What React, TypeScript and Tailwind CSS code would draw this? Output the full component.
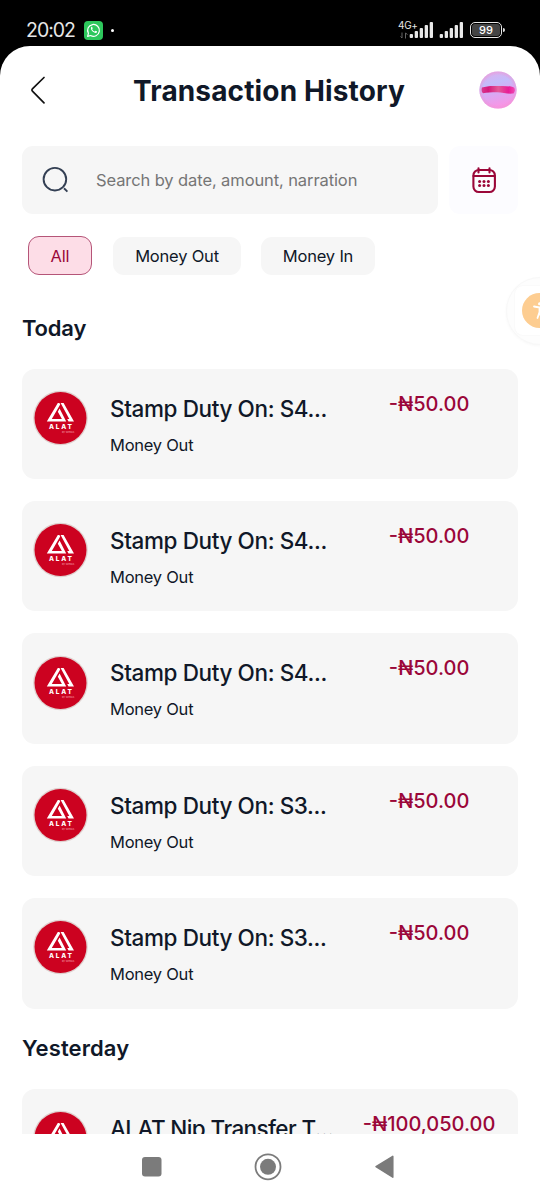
import React from "react";

function StatusBar() {
  const bars = [4, 7, 10, 13, 16];
  return (
    <div className="flex h-[46px] shrink-0 items-start bg-black pl-[26px] pt-[20px] text-[#e6e6e6]">
      <span className="w-[58px] whitespace-nowrap text-[19.5px] font-normal leading-[20px] tracking-[-1px]">20:02</span>
      <svg width="19" height="19" viewBox="0 0 19 19" className="mt-px">
        <rect width="19" height="19" rx="4" fill="#2dc75c" />
        <path d="M3.6 15.4l.8-3.1a5.9 5.9 0 1 1 2.2 2.2z" fill="none" stroke="#fff" strokeWidth="1.2" strokeLinejoin="round" />
        <path d="M7.2 6.1c.5-.5.8-.4 1.1.2l.4 1c.1.4-.5.8-.5 1.1.5 1 1.3 1.7 2.3 2.1.4 0 .7-.9 1.1-.8l1.2.6c.5.3.1 1.2-.3 1.5-1.8 1.2-6.8-2.7-5.3-5.7z" fill="#fff" />
      </svg>
      <span className="ml-[8px] mt-[9px] size-[3px] rounded-full bg-white" />
      <div className="ml-[284px] flex items-start">
        <div className="flex w-[11px] flex-col">
          <span className="whitespace-nowrap text-[10px] leading-[11px] tracking-[-0.3px]">4G+</span>
          <svg width="8" height="7" viewBox="0 0 8 7" className="ml-[2px] mt-px" fill="none" stroke="#666" strokeWidth="1">
            <path d="M2 0.5v5.5M0.5 4.5L2 6M5.5 6.5V1M7.5 2.5L5.5 1" />
          </svg>
        </div>
        <svg width="25" height="18" viewBox="0 0 25 18" fill="#e8e8e8">
          {bars.map((h, i) => (
            <rect key={h} x={i * 5 + 0.7} y={18 - h} width="3.3" height={h} rx="1" />
          ))}
        </svg>
        <svg width="25" height="18" viewBox="0 0 25 18" fill="#e8e8e8" className="ml-[5px]">
          {bars.map((h, i) => (
            <rect key={h} x={i * 5 + 0.7} y={18 - h} width="3.3" height={h} rx="1" />
          ))}
        </svg>
        <div className="ml-[6px] mt-[2px] flex h-[16px] w-[32px] items-center justify-center rounded-[5px] border-[1.5px] border-[#e6e6e6] p-[1px]">
          <span className="flex h-full w-full items-center justify-center rounded-[3px] bg-[#444] text-[11px] font-medium leading-none text-white">99</span>
        </div>
        <span className="ml-px mt-[8px] h-[4px] w-[2px] rounded-r bg-[#ddd]" />
      </div>
    </div>
  );
}

function Orb() {
  return (
    <svg width="38" height="38" viewBox="0 0 38 38">
      <defs>
        <linearGradient id="orb" x1="0.35" y1="0" x2="0.6" y2="1">
          <stop offset="0" stopColor="#dcb0ee" />
          <stop offset="0.3" stopColor="#c3bcfb" />
          <stop offset="0.58" stopColor="#d9a8f3" />
          <stop offset="1" stopColor="#ff90e2" />
        </linearGradient>
        <radialGradient id="rim">
          <stop offset="0.8" stopColor="#f08fd0" stopOpacity="0" />
          <stop offset="1" stopColor="#ec9bd6" stopOpacity="0.6" />
        </radialGradient>
        <linearGradient id="band">
          <stop offset="0" stopColor="#d83a90" />
          <stop offset="0.2" stopColor="#d5187c" />
          <stop offset="0.5" stopColor="#e25a98" />
          <stop offset="0.8" stopColor="#e81c96" />
          <stop offset="1" stopColor="#f04ab4" />
        </linearGradient>
        <filter id="soft" x="-10%" y="-30%" width="120%" height="160%"><feGaussianBlur stdDeviation="0.7" /></filter>
      </defs>
      <circle cx="19" cy="19" r="18.6" fill="url(#orb)" />
      <circle cx="19" cy="19" r="18.6" fill="url(#rim)" />
      <path d="M3 16.6C7 15 12 14.700 19 15S31 14.600 35 16.600C36.300 18.500 36.300 20.500 34.500 22.500C28 23.200 24 21.300 18 21.300S8 21.500 4 22.200C2.500 21 2.300 18.500 3 16.600z" fill="url(#band)" filter="url(#soft)" />
    </svg>
  );
}

function AlatLogo() {
  return (
    <svg width="56" height="56" viewBox="0 0 56 56" className="shrink-0">
      <circle cx="27.5" cy="28" r="27.3" fill="#dfd0ce" />
      <circle cx="27.5" cy="28" r="26" fill="#cc0220" />
      <path d="M24.8 13L13.8 31.500H33.200L26.600 18.600L24.800 21.700L28.900 28.900H18.800L27.200 14.600L26.400 13z" fill="#fff" />
      <path d="M27.6 13H30.600L41 31.500H35.500L34.200 28.900H36.300z" fill="#fff" />
      <text x="28.3" y="38.8" textAnchor="middle" fontFamily="Inter, sans-serif" fontSize="6.5" fontWeight="800" letterSpacing="1.8" fill="#fff">ALAT</text>
      <text x="29" y="42.7" fontFamily="Inter, sans-serif" fontSize="2.7" fill="#f5a9b2">by WEMA</text>
    </svg>
  );
}

type Entry = { title: string; amount: string; wide?: boolean };

function Card({ title, amount, wide }: Entry) {
  return (
    <div className="flex h-[110.5px] shrink-0 items-start rounded-[13px] bg-[#f6f6f6] pl-[11px]">
      <div className="mt-[21.4px]"><AlatLogo /></div>
      <div className="ml-[21px] mt-[25px] w-[230px] whitespace-nowrap text-[#101828]">
        <div className={wide ? "text-[22.5px] font-medium leading-[30px] tracking-[-0.6px]" : "text-[22.5px] font-medium leading-[30px] tracking-[-0.38px]"}>{title}</div>
        <div className="mt-[9px] text-[16.5px] leading-[24px] tracking-[-0.25px]">Money Out</div>
      </div>
      <div className="mt-[23px] flex w-[178px] justify-center whitespace-nowrap text-[20px] font-medium leading-[24px] text-[#9b0739]">{amount}</div>
    </div>
  );
}

const today: Entry[] = [
  { title: "Stamp Duty On: S4...", amount: "-₦50.00" },
  { title: "Stamp Duty On: S4...", amount: "-₦50.00" },
  { title: "Stamp Duty On: S4...", amount: "-₦50.00" },
  { title: "Stamp Duty On: S3...", amount: "-₦50.00" },
  { title: "Stamp Duty On: S3...", amount: "-₦50.00" },
];

export default function App() {
  return (
    <div className="relative flex h-[1199px] w-[540px] flex-col overflow-hidden bg-black font-['Inter',sans-serif]">
      <StatusBar />
      <div className="flex min-h-0 flex-1 flex-col overflow-hidden rounded-t-[30px] bg-white">
        <main className="flex h-[1087.5px] shrink-0 flex-col overflow-hidden px-[22px]">
          <header className="flex h-[88px] shrink-0 items-center">
            <svg width="32" height="32" viewBox="0 0 32 32" fill="none" stroke="#111" strokeWidth="1.7" strokeLinecap="round" strokeLinejoin="round" className="shrink-0">
              <path d="M22 3.5L10.4 14.8Q9.3 16 10.4 17.2L22 28.8" />
            </svg>
            <h1 className="ml-[79px] mt-[2px] w-[346px] shrink-0 whitespace-nowrap text-[28px] font-bold leading-[34px] tracking-[0.14px] text-[#101828]">Transaction History</h1>
            <Orb />
          </header>

          <div className="mt-[12px] flex h-[68px] shrink-0 gap-[11px]">
            <div className="flex w-[416px] items-center rounded-[11px] bg-[#f6f6f6] pl-[20px]">
              <svg width="28" height="28" viewBox="0 0 28 28" fill="none" stroke="#344054" strokeWidth="1.9">
                <circle cx="12.9" cy="13.2" r="11.3" />
                <path d="M22 22.3L25.4 25.6" />
              </svg>
              <span className="ml-[26px] whitespace-nowrap text-[16.5px] tracking-[-0.1px] text-[#757575]">Search by date, amount, narration</span>
            </div>
            <div className="flex flex-1 items-center justify-center rounded-[11px] bg-[#fcfcff]">
              <svg width="26" height="28" viewBox="0 0 26 28" fill="none" stroke="#9b0739" strokeWidth="2.1" strokeLinecap="round">
                <path d="M7.5 2.2v4.2M18.5 2.2v4.2M2.5 10h21" />
                <rect x="2.4" y="4" width="21.5" height="22" rx="5.5" />
                <g fill="#9b0739" stroke="none">
                  {[8.6, 13, 17.4].map((x) => (
                    <React.Fragment key={x}>
                      <circle cx={x} cy="15.6" r="1.5" />
                      <circle cx={x} cy="19.6" r="1.5" />
                    </React.Fragment>
                  ))}
                </g>
              </svg>
            </div>
          </div>

          <div className="mt-[22px] flex h-[39px] shrink-0 items-center pl-[6px] text-[16.5px] tracking-[-0.2px] text-[#101828]">
            <button className="flex h-[39px] w-[64px] items-center justify-center rounded-[11px] border border-[#b55578] bg-[#fddde7] pt-px text-[#9b0739]">All</button>
            <button className="ml-[21px] flex h-[38px] w-[128px] items-center justify-center whitespace-nowrap rounded-[11px] bg-[#f6f6f6] pt-px">Money Out</button>
            <button className="ml-[20px] flex h-[38px] w-[114px] items-center justify-center whitespace-nowrap rounded-[11px] bg-[#f6f6f6] pt-px">Money In</button>
          </div>

          <h2 className="mt-[38px] shrink-0 text-[22px] font-semibold leading-[30px] tracking-[-0.2px] text-[#101828]">Today</h2>
          <section className="mt-[25.5px] flex shrink-0 flex-col gap-[21.9px]">
            {today.map((e, i) => <Card key={i} {...e} />)}
          </section>
          <h2 className="mt-[24px] shrink-0 text-[22px] font-semibold leading-[30px] tracking-[0.1px] text-[#101828]">Yesterday</h2>
          <section className="mt-[26.3px] shrink-0">
            <Card title="ALAT Nip Transfer T..." amount="-₦100,050.00" wide />
          </section>
        </main>
        <nav className="flex flex-1 items-center bg-white">
          <svg width="540" height="65" viewBox="0 0 540 65" fill="#7b7b7b">
            <rect x="142" y="23" width="19.5" height="19.5" rx="3" />
            <circle cx="268" cy="32.8" r="12.5" fill="none" stroke="#7b7b7b" strokeWidth="1.8" />
            <circle cx="268" cy="32.8" r="8" />
            <path d="M376 32.7L392.8 22.3V43.2z" stroke="#7b7b7b" strokeWidth="1.5" strokeLinejoin="round" />
          </svg>
        </nav>
      </div>
      <div className="absolute left-[506px] top-[277px] h-[68px] w-[68px] rounded-full border border-[#f8f8f8] bg-[#fdfdfd] shadow-[0_1px_3px_rgba(0,0,0,0.03)]">
        <div className="ml-[8px] mt-[8px] flex h-[49px] w-[49px] items-center justify-center rounded-[8px] bg-white shadow-[0_0_2px_rgba(0,0,0,0.05)]">
          <svg width="35" height="35" viewBox="0 0 35 35">
            <circle cx="17.5" cy="17.5" r="17.5" fill="#fdcd91" />
            <path d="M12 13.5L17.5 14.5L23 13.5M17.5 14.5V19L15.5 25M17.5 19L19.5 25" fill="none" stroke="#fff" strokeWidth="1.8" strokeLinecap="round" />
            <circle cx="17.5" cy="10.8" r="1.5" fill="#fff" />
          </svg>
        </div>
      </div>
    </div>
  );
}
